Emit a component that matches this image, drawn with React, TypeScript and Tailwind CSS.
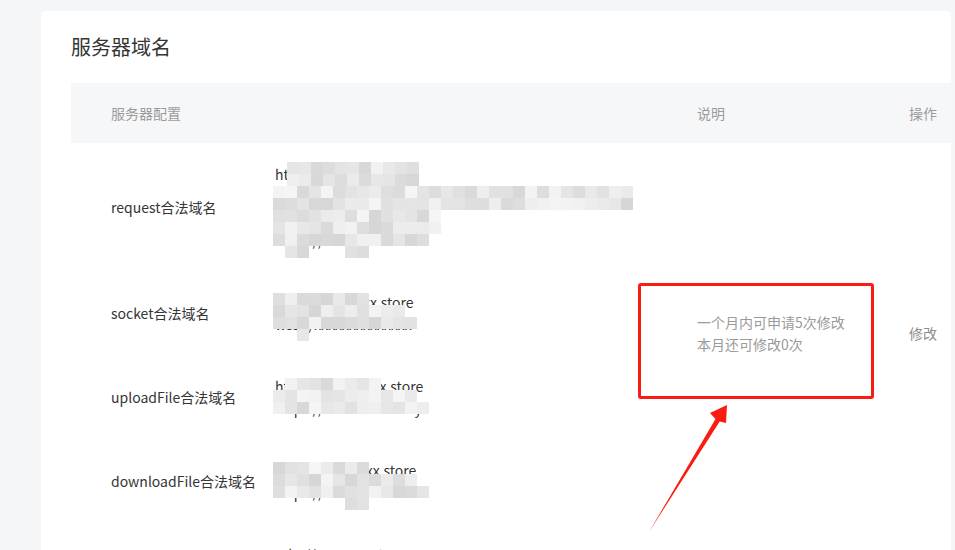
import React from "react";

type Block = { x: number; y: number; cols: number; rows: number };

// blurred (mosaic) areas over the domain list
const mosaicBlocks: Block[] = [
    { x: 287, y: 162, cols: 11, rows: 2 },
    { x: 273, y: 186, cols: 30, rows: 2 },
    { x: 273, y: 210, cols: 14, rows: 2 },
    { x: 273, y: 234, cols: 13, rows: 1 },
    { x: 285, y: 246, cols: 2, rows: 1 },
    { x: 345, y: 246, cols: 2, rows: 1 },

    { x: 273, y: 293, cols: 8, rows: 1 },
    { x: 273, y: 305, cols: 11, rows: 1 },
    { x: 273, y: 317, cols: 12, rows: 1 },
    { x: 297, y: 329, cols: 1, rows: 1 },

    { x: 285, y: 378, cols: 8, rows: 1 },
    { x: 273, y: 390, cols: 12, rows: 1 },
    { x: 273, y: 402, cols: 13, rows: 1 },

    { x: 273, y: 462, cols: 8, rows: 1 },
    { x: 273, y: 474, cols: 12, rows: 1 },
    { x: 273, y: 486, cols: 13, rows: 1 },
    { x: 345, y: 498, cols: 2, rows: 1 },
];

const rows = [
    {
        label: "request合法域名",
        domains: [
            "https://xxxxxxxxx",
            "https://xxxxxxxxxxxxxxxxxxxxxxxxxxxxxx",
            "https://xxxxxxxxxxxxxxxx",
            "https://xxxxxxxxxxxx",
        ],
    },
    {
        label: "socket合法域名",
        domains: ["wss://xxxxxxxxx.store", "wss://xxxxxxxxxxxxxx"],
    },
    {
        label: "uploadFile合法域名",
        domains: ["https://xxxxxxxxx.store", "https://xxxxxxxxxxxxxy"],
    },
    {
        label: "downloadFile合法域名",
        domains: ["https://xxxxxxxx.store", "https://xxxxxxxxxxxxx"],
    },
    {
        label: "udp合法域名",
        domains: ["udp://xxx.xxxx.store", "udp://xxxxxxxx.com", "udp://xxxx.com"],
    },
];

function Mosaic() {
    const cells: { x: number; y: number; c: number }[] = [];
    let seed = 7;
    mosaicBlocks.forEach((b) => {
        for (let r = 0; r < b.rows; r++) {
            for (let c = 0; c < b.cols; c++) {
                seed = (seed * 9301 + 49297) % 233280;
                const shade = 214 + Math.floor((seed / 233280) * 32);
                cells.push({ x: b.x + c * 12, y: b.y + r * 12, c: shade });
            }
        }
    });
    return (
        <>
            {cells.map((cell, i) => (
                <div
                    key={i}
                    className="absolute w-[12px] h-[12px]"
                    style={{
                        left: cell.x,
                        top: cell.y,
                        backgroundColor: `rgb(${cell.c},${cell.c},${cell.c})`,
                    }}
                />
            ))}
        </>
    );
}

export default function App() {
    return (
        <div
            className="relative w-[955px] h-[550px] overflow-hidden bg-[#f5f6f8] pl-[41px] pt-[11px]"
            style={{ fontFamily: '"Noto Sans CJK SC", "Noto Sans", sans-serif' }}
        >
            <div className="w-[910px] min-h-[700px] bg-white rounded-[4px] pl-[30px]">
                <h2 className="pt-[22px] h-[72px] text-[20px] leading-[28px] text-[#353535]">
                    服务器域名
                </h2>

                <div className="grid grid-cols-[204px_422px_212px_1fr]">
                    <div className="col-span-2 bg-[#f6f7f9] h-[60px] flex items-center pl-10 text-[14px] text-[#9b9b9b]">
                        服务器配置
                    </div>
                    <div className="bg-[#f6f7f9] h-[60px] flex items-center text-[14px] text-[#9b9b9b]">
                        说明
                    </div>
                    <div className="bg-[#f6f7f9] h-[60px] flex items-center text-[14px] text-[#9b9b9b] whitespace-nowrap">
                        操作
                    </div>

                    {rows.slice(0, 4).map((row, i) => (
                        <React.Fragment key={row.label}>
                            <div className="col-start-1 flex items-center pl-10 text-[14px] text-[#353535]">
                                {row.label}
                            </div>
                            <div className="col-start-2 py-5 text-[14px] leading-[22px] text-[#353535] whitespace-nowrap">
                                {row.domains.map((d) => (
                                    <div key={d}>{d}</div>
                                ))}
                            </div>
                            {i === 0 && (
                                <>
                                    <div className="col-start-3 row-span-4 flex flex-col justify-center text-[14px] leading-[22px] text-[#9a9a9a]">
                                        <div>一个月内可申请5次修改</div>
                                        <div>本月还可修改0次</div>
                                    </div>
                                    <div className="col-start-4 row-span-4 flex items-center text-[14px] text-[#8c8c8c] whitespace-nowrap">
                                        修改
                                    </div>
                                </>
                            )}
                        </React.Fragment>
                    ))}

                    <div className="col-start-1 flex items-center pl-10 text-[14px] text-[#353535]">
                        {rows[4].label}
                    </div>
                    <div className="col-start-2 py-5 text-[14px] leading-[22px] text-[#353535] whitespace-nowrap">
                        {rows[4].domains.map((d) => (
                            <div key={d}>{d}</div>
                        ))}
                    </div>
                </div>
            </div>

            <Mosaic />

            {/* red annotation box */}
            <div className="absolute left-[638px] top-[283px] w-[236px] h-[116px] border-[3px] border-[#fa1c10] rounded-[3px]" />

            <svg
                className="absolute left-0 top-0 pointer-events-none"
                width="955"
                height="550"
                viewBox="0 0 955 550"
            >
                <polygon
                    points="649,532 715.5,419 710,413 727,405 726,423 719.7,421.6"
                    fill="#fa1c10"
                />
            </svg>
        </div>
    );
}
